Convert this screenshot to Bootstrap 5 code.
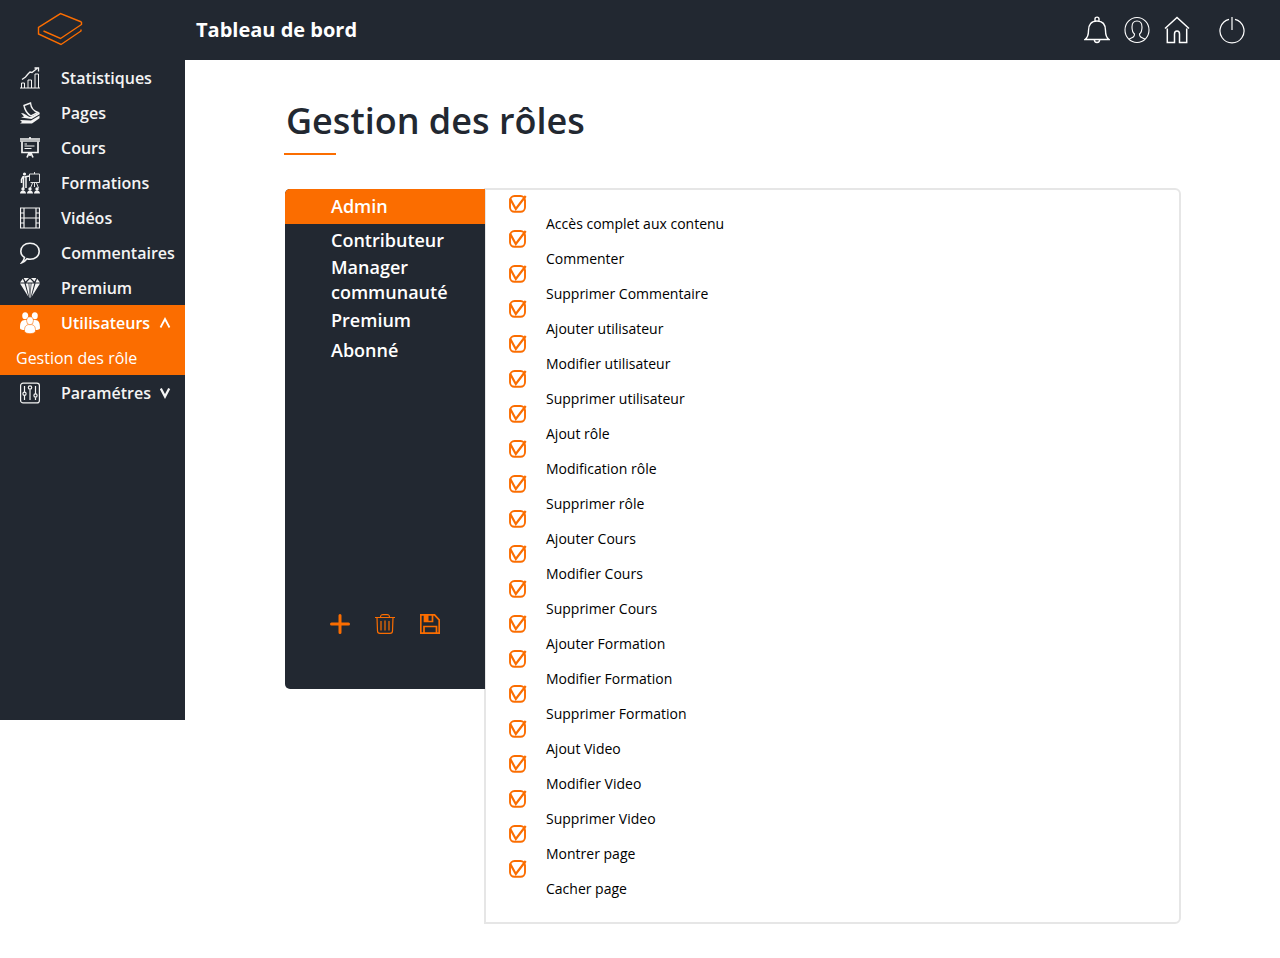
<!DOCTYPE html>
<html lang="fr">
<head>
<meta charset="utf-8">
<meta name="viewport" content="width=device-width, initial-scale=1">
<title>Gestion des rôles</title>
<link rel="stylesheet" href="https://cdn.jsdelivr.net/npm/bootstrap@5.3.0/dist/css/bootstrap.min.css">
<style>
:root { --ink: #222831; --accent: #fb6d00; --line: #e6e6e6; }
body { font-family: "Open Sans", "Noto Sans", sans-serif; color: #000; }
svg { display: block; fill: none; stroke: currentColor; }
.topbar { height: 60px; background: var(--ink); }
.brand-box { width: 185px; padding-left: 37px; color: var(--accent); }
.brand-box svg { margin-bottom: 2px; }
.page-name { font-size: 20px; line-height: 28px; padding-left: 11px; }
.tools { gap: 14px; padding-right: 35px; }
.tools a { color: #fff; }
.tools .power { margin-left: 15px; }
.sidebar { width: 185px; height: 660px; background: var(--ink); }
.side-link { height: 35px; padding-left: 20px; font-size: 16px; font-weight: 600; color: #f4f4f4; text-decoration: none; white-space: nowrap; }
.side-link .glyph { margin-right: 21px; }
.side-link .chev { margin-left: 9px; }
.side-sub { font-weight: 400; padding-left: 16px; }
.on { background: var(--accent); color: #fff; }
main { padding: 36px 100px; min-width: 0; }
h1 { font-size: 36px; line-height: 50px; font-weight: 600; color: var(--ink); margin: 0; padding-left: 1px; }
.rule { width: 52px; height: 2px; margin: 7px 0 34px -1px; background: var(--accent); }
.roles { width: 200px; height: 500px; z-index: 1; background: var(--ink); border-radius: 5px 0 0 5px; overflow: hidden; }
.role-btn { border: 0; background: none; color: #fff; font-size: 18px; line-height: 25px; font-weight: 600; text-align: left; padding: 0 30px 0 46px; min-height: 30px; }
.role-btn.on { background: var(--accent); height: 35px; margin-bottom: 1px; }
.role-actions { gap: 25px; padding: 0 45px 55px; }
.role-actions button { border: 0; background: none; padding: 0; color: var(--accent); }
.rights { margin: -1px -1px 0; border: 2px solid var(--line); border-radius: 0 6px 6px 0; padding: 0 23px 32px; }
.rights ul { display: grid; grid-auto-rows: 35px; }
.rights li { display: flex; align-items: flex-start; gap: 19px; }
.rights label { font-size: 14px; line-height: 20px; margin-top: 24px; }
.tick { appearance: none; flex: none; width: 18px; height: 18px; margin: 5px 0 0; border: 0; cursor: pointer;
  background: url("data:image/svg+xml,%3Csvg xmlns='http://www.w3.org/2000/svg' viewBox='0 0 18 18' fill='none' stroke='%23fb6d00'%3E%3Crect x='1' y='1' width='15' height='15.8' rx='4.5' stroke-width='2'/%3E%3C/svg%3E"); }
.tick:checked { background-image: url("data:image/svg+xml,%3Csvg xmlns='http://www.w3.org/2000/svg' viewBox='0 0 18 18' fill='none' stroke='%23fb6d00'%3E%3Crect x='1' y='1' width='15' height='15.8' rx='4.5' stroke-width='1.9'/%3E%3Cpath d='M1 3.5 6.8 14 16.700 1' stroke-width='2.2'/%3E%3C/svg%3E"); }
</style>
</head>
<body>
<header class="topbar d-flex align-items-center">
  <a class="brand-box" href="#" aria-label="Accueil"><svg width="46" height="34" viewBox="0 0 46 34" stroke-width="1.4"><path d="M44.500 10v2.500L23.500 26.500 6.500 19M44.500 10 23.500 1.600 1.500 15.500v6.500L24 32.500 44 19v-1.500"/></svg></a>
  <span class="page-name fw-bold text-white">Tableau de bord</span>
  <nav class="tools d-flex align-items-center ms-auto" aria-label="Outils">
    <a href="#" aria-label="Notifications"><svg width="26" height="28" viewBox="0 0 26 28" stroke-width="1.4"><path d="M1 23.500c3-2 3.500-5 3.500-9 0-6 3-9.500 8.500-9.500s8.500 3.500 8.500 9.500c0 4 .5 7 3.500 9zM11 5V3c0-2.500 4-2.500 4 0v2M10.300 23.500c0 4 5.400 4 5.400 0"/></svg></a>
    <a href="#" aria-label="Profil"><svg width="26" height="28" viewBox="0 0 26 28" stroke-width="1.100"><ellipse cx="13" cy="14" rx="12" ry="12.500"/><path d="M5 23c4-1.500 5.500-2 5.500-5-2-1.500-2.500-4-2.500-7 0-4 1.500-6 5-6s5 2 5 6c0 3-.5 5.500-2.500 7 0 3 1.500 3.500 5.500 5"/></svg></a>
    <a href="#" aria-label="Accueil"><svg width="26" height="28" viewBox="0 0 26 28" stroke-width="1.500"><path d="M1 12.500 13 1.500l12 11M3.300 12.500v14h7.200V18c0-4 5-4 5 0v8.500h7.200v-14"/></svg></a>
    <a class="power" href="#" aria-label="Déconnexion"><svg width="26" height="28" viewBox="0 0 26 28" stroke-width="1.200"><path d="M13 1v13M10 3.300a12 12 0 1 0 6 0"/></svg></a>
  </nav>
</header>

<div class="d-flex align-items-start">
  <nav class="sidebar flex-shrink-0 d-flex flex-column" aria-label="Menu">
    <a class="side-link d-flex align-items-center" href="#"><svg class="glyph" width="20" height="22" viewBox="0 0 20 22"><path d="M0 21h20M1.500 21v-5h3v5M8 21v-8h3.500v8M15 21V7h3.500v14"/><path d="M2 12.500 5.500 10 8 7l2-2 2 .5 5-4M14.500 1h4v3.500" stroke-width="1.300"/></svg>Statistiques</a>
    <a class="side-link d-flex align-items-center" href="#"><svg class="glyph" width="20" height="22" viewBox="0 0 20 22"><path d="M4 3.500 10.500 1c.5 5 3 8 7.500 9.500L11 14C7.500 12 5 9 4 3.500z" stroke-width="1.400"/><path d="M1 11c4 0 6 3.500 9.500 4L19 10.500l1 1.500-8.500 5L1 15.500l3-1zM0 18l11 .5 8.500-5v2.700L12 21.500H0l2-1.500z" fill="currentColor" stroke="none"/></svg>Pages</a>
    <a class="side-link d-flex align-items-center" href="#"><svg class="glyph" width="20" height="22" viewBox="0 0 20 22"><path d="M0 2h20M10 0v2M2 4.500v11h16v-11M9 16l-2 4.500M11 16l2 4.500M10 16v3" stroke-width="1.700"/><path d="M0 4h20" stroke-width="2" opacity=".7"/><path d="M4.500 7h2.500M4.500 9h10M4.500 11.500h7" stroke-width="1.200"/></svg>Cours</a>
    <a class="side-link d-flex align-items-center" href="#"><svg class="glyph" width="20" height="22" viewBox="0 0 20 22"><path d="M9.500 9V2h10v8.500h-9M14.500 0v2M14.500 11v4M12.500 11l-2 5M16.500 11l2 5" stroke-width=".9"/><g fill="currentColor" stroke="none"><circle cx="4.500" cy="2" r="1.600"/><circle cx="3" cy="17" r="1.700"/><circle cx="10" cy="17" r="1.700"/><circle cx="17" cy="17" r="1.700"/><path d="M0 21.500c0-4 6-4 6 0zM7 21.500c0-4 6-4 6 0zM14 21.500c0-4 6-4 6 0z"/></g><path d="M4.500 5 9.500 4M3 4.500 1.500 7.500V11M3.500 4v12M6 4v12" stroke-width="1.500"/></svg>Formations</a>
    <a class="side-link d-flex align-items-center" href="#"><svg class="glyph" width="20" height="22" viewBox="0 0 20 22"><path d="M.5 1h19v20H.5zM4 1v20M16 1v20M4 11h12M.5 6H4M.5 11H4M.5 16H4M16 6h3.500M16 11h3.500M16 16h3.500" stroke-width="1.200"/></svg>Vidéos</a>
    <a class="side-link d-flex align-items-center" href="#"><svg class="glyph" width="20" height="22" viewBox="0 0 20 22" stroke-width="1.600"><path d="M4.500 15.500C2 14 .8 12 .8 9.300.8 4.500 4.500 1.300 10 1.300s9.200 3.200 9.200 8-4 8-9.200 8c-1 0-2-.1-3-.5-1.500 2-3 3.300-5.200 4 1.500-2 2.500-3.500 2.700-5.300z"/></svg>Commentaires</a>
    <a class="side-link d-flex align-items-center" href="#"><svg class="glyph" width="20" height="22" viewBox="0 0 20 22"><g fill="currentColor" stroke="none"><path d="M3.700 1H9L5.500 4.500zM11 1h5.300l-1.800 3.500zM2.800 1.700 4.500 5.500H0zM17.200 1.700 20 5.500h-4.500zM10 1.800 13.500 5.500h-7zM0 6.500h4.500l4 13.500zM5.700 6.500h2.800l1.300 14.500h-.3zM9.300 6.500h1.400L10 19zM11.500 6.500h2.800l-3.800 14.500h-.3zM15.500 6.500H20L11.500 20z"/></g></svg>Premium</a>
    <a class="side-link on d-flex align-items-center" href="#" aria-expanded="true"><svg class="glyph" width="20" height="22" viewBox="0 0 20 22"><g fill="currentColor" stroke="none"><ellipse cx="5.200" cy="3.800" rx="3" ry="3.500"/><ellipse cx="14.800" cy="3.800" rx="3" ry="3.500"/><path d="M0 16c0-5 1-8 5-8s5 2 5 2 1-2 5-2 5 3 5 8c0 2-4 2-5 2H5c-1 0-5 0-5-2z"/></g><g fill="currentColor" stroke="#fb6d00" stroke-width=".6"><path d="M4.500 19c0-4 1-6.500 5.500-6.500s5.500 2.500 5.500 6.500c0 3.500-11 3.500-11 0z"/><ellipse cx="10" cy="8.800" rx="3.400" ry="4"/></g></svg>Utilisateurs<svg class="chev" width="12" height="12" viewBox="0 0 12 12" stroke-width="1.800"><path d="M1.500 10.500 6 2l4.500 8.500"/></svg></a>
    <a class="side-link side-sub on d-flex align-items-center" href="#" aria-current="page">Gestion des rôle</a>
    <a class="side-link d-flex align-items-center" href="#" aria-expanded="false"><svg class="glyph" width="20" height="22" viewBox="0 0 20 22" stroke-width="1.200"><rect x=".6" y="1.100" width="18.800" height="19.800" rx="2.500"/><path d="M4.500 4v6M4.500 13.500V18M10 7.500V18M15.500 4v8M15.500 15.500V18"/><circle cx="4.500" cy="11.800" r="1.600"/><circle cx="10" cy="5.500" r="1.700"/><circle cx="15.500" cy="13.500" r="1.600"/></svg>Paramétres<svg class="chev" width="12" height="12" viewBox="0 0 12 12" stroke-width="2.300"><path d="M.8 1.500 5 9.500 9.200 1.500"/></svg></a>
  </nav>

  <main class="flex-grow-1">
    <h1>Gestion des rôles</h1>
    <div class="rule"></div>
    <div class="d-flex align-items-start">
      <section class="roles flex-shrink-0 position-relative d-flex flex-column" aria-label="Rôles">
        <button type="button" class="role-btn on">Admin</button>
        <button type="button" class="role-btn">Contributeur</button>
        <button type="button" class="role-btn">Manager communauté</button>
        <button type="button" class="role-btn">Premium</button>
        <button type="button" class="role-btn">Abonné</button>
        <div class="role-actions d-flex mt-auto">
          <button type="button" aria-label="Ajouter"><svg width="20" height="20" viewBox="0 0 20 20" stroke-width="3" stroke-linecap="round"><path d="M10 1.500v17M1.500 10h17"/></svg></button>
          <button type="button" aria-label="Supprimer"><svg width="20" height="20" viewBox="0 0 20 20" stroke-width="1.200"><path d="M0 3.500h20M5.500 3.500C5.500 1 6 .6 8 .6h4c2 0 2.500.4 2.500 2.900M2 3.500 2.500 17c0 1.500 1 2.400 2.500 2.400h10c1.500 0 2.500-.9 2.500-2.400L18 3.500M6 7v9.500M10 6.500v10M14 7v9.500"/></svg></button>
          <button type="button" aria-label="Enregistrer"><svg width="20" height="20" viewBox="0 0 20 20" stroke-width="1.700"><path d="M.8.8h13.700l4.700 5v13.400H.8zM4.500 1v6.500h8V1M4 19v-6.500h12.500V19"/><path d="M4.500 1h4v6.500h-4z" fill="currentColor" stroke="none"/></svg></button>
        </div>
      </section>
      <section class="rights flex-grow-1" aria-label="Droits">
        <ul class="list-unstyled mb-0">
          <li><input class="tick" type="checkbox" id="d1" checked><label for="d1">Accès complet aux contenu</label></li>
          <li><input class="tick" type="checkbox" id="d2" checked><label for="d2">Commenter</label></li>
          <li><input class="tick" type="checkbox" id="d3" checked><label for="d3">Supprimer Commentaire</label></li>
          <li><input class="tick" type="checkbox" id="d4" checked><label for="d4">Ajouter utilisateur</label></li>
          <li><input class="tick" type="checkbox" id="d5" checked><label for="d5">Modifier utilisateur</label></li>
          <li><input class="tick" type="checkbox" id="d6" checked><label for="d6">Supprimer utilisateur</label></li>
          <li><input class="tick" type="checkbox" id="d7" checked><label for="d7">Ajout rôle</label></li>
          <li><input class="tick" type="checkbox" id="d8" checked><label for="d8">Modification rôle</label></li>
          <li><input class="tick" type="checkbox" id="d9" checked><label for="d9">Supprimer rôle</label></li>
          <li><input class="tick" type="checkbox" id="d10" checked><label for="d10">Ajouter Cours</label></li>
          <li><input class="tick" type="checkbox" id="d11" checked><label for="d11">Modifier Cours</label></li>
          <li><input class="tick" type="checkbox" id="d12" checked><label for="d12">Supprimer Cours</label></li>
          <li><input class="tick" type="checkbox" id="d13" checked><label for="d13">Ajouter Formation</label></li>
          <li><input class="tick" type="checkbox" id="d14" checked><label for="d14">Modifier Formation</label></li>
          <li><input class="tick" type="checkbox" id="d15" checked><label for="d15">Supprimer Formation</label></li>
          <li><input class="tick" type="checkbox" id="d16" checked><label for="d16">Ajout Video</label></li>
          <li><input class="tick" type="checkbox" id="d17" checked><label for="d17">Modifier Video</label></li>
          <li><input class="tick" type="checkbox" id="d18" checked><label for="d18">Supprimer Video</label></li>
          <li><input class="tick" type="checkbox" id="d19" checked><label for="d19">Montrer page</label></li>
          <li><input class="tick" type="checkbox" id="d20" checked><label for="d20">Cacher page</label></li>
        </ul>
      </section>
    </div>
  </main>
</div>
<script src="https://cdn.jsdelivr.net/npm/bootstrap@5.3.0/dist/js/bootstrap.bundle.min.js"></script>
</body>
</html>
